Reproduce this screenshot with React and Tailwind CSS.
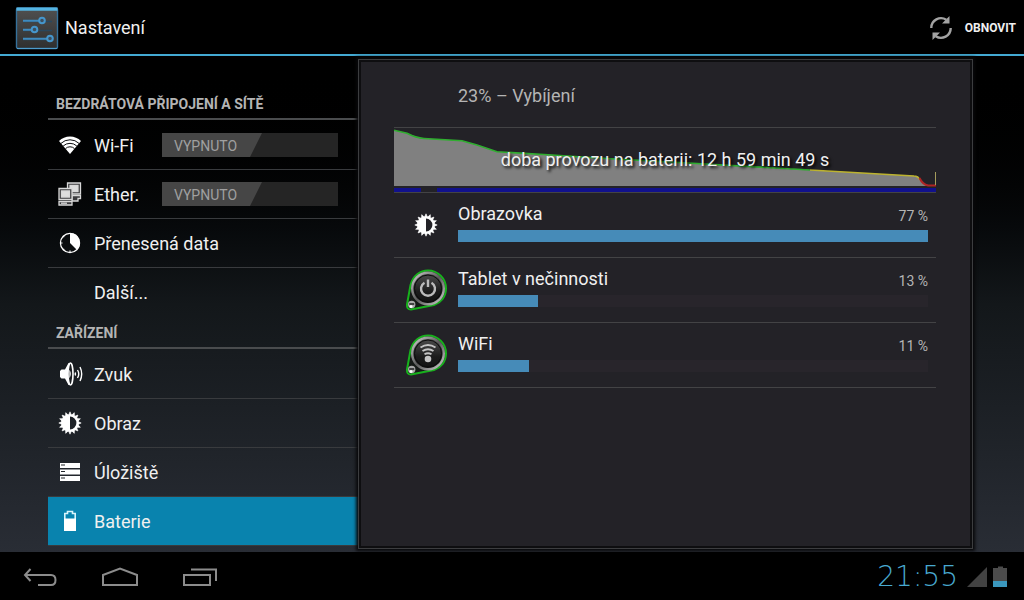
import { useState } from 'react'

const TEETH = Array.from({ length: 16 }, (_, i) => i * 22.5)

const WifiIcon = () => (
  <svg width="24" height="24" viewBox="0 0 24 24">
    <path d="M1 8a15.500 15.500 0 0 1 22 0L12 21z" fill="#fff" />
    <g fill="none" stroke="#0b0c0e" strokeWidth="1">
      <path d="M3 10.400a13 13 0 0 1 18 0" />
      <path d="M5.200 13a10 10 0 0 1 13.600 0" />
      <path d="M7.500 15.600a6.500 6.500 0 0 1 9 0" />
    </g>
  </svg>
)

const EthernetIcon = () => (
  <svg width="24" height="24" viewBox="0 0 24 24" fill="#3a3a3c" stroke="#d8d8d8" strokeWidth="1.300">
    <path d="M9.500 1h13v11h-13z" />
    <path d="M12 3.500h8v6h-8z" fill="#ddd" />
    <path d="M14 13.500h8.500v3H20v2.500h-6z" />
    <path d="M1 6.500h13v11H1z" />
    <path d="M3.500 9h8v6h-8z" fill="#ddd" />
    <path d="M1 19.500h13v3.500H1z" />
    <path d="M3 21.200h6" />
  </svg>
)

const DataIcon = () => (
  <svg width="24" height="24" viewBox="0 0 24 24">
    <circle cx="12" cy="12" r="9.600" fill="none" stroke="#fff" strokeWidth="1.200" />
    <path d="M12 2a10 10 0 0 1 7 17L12 12z" fill="#fff" />
    <path d="M2 12h2.500M12 22v-2.500M5 5l1.200 1.200M5 19l1.200-1.200" stroke="#fff" strokeWidth="1.200" />
  </svg>
)

const SoundIcon = () => (
  <svg width="26" height="26" viewBox="0 0 26 26">
    <path d="M4.500 8.500H8L11.500 2h2v22h-2L8 17.500H4.500L3 16v-6z" fill="#fff" />
    <ellipse cx="13.500" cy="13" rx="2.500" ry="11" fill="#1b1e22" stroke="#fff" strokeWidth="1.600" />
    <path d="M12.300 8.500q3 4.500 0 9z" fill="#fff" />
    <g fill="none" stroke="#fff" strokeWidth="1.400">
      <path d="M18 11.500q1 1.500 0 3" />
      <path d="M20.500 9q2.500 4 0 8" />
      <path d="M23 6q3.400 7 0 14" />
    </g>
  </svg>
)

const BrightnessIcon = () => (
  <svg width="24" height="24" viewBox="0 0 24 24">
    {TEETH.map(a => (
      <path key={a} d="M10.600 4L12 .8 13.400 4z" fill="#fff" stroke="#fff" strokeWidth=".6" transform={`rotate(${a} 12 12)`} />
    ))}
    <circle cx="12" cy="12" r="7.600" fill="none" stroke="#fff" strokeWidth="2.400" />
    <path d="M12 4a8 8 0 0 0 0 16z" fill="#fff" />
  </svg>
)

const StorageIcon = () => (
  <svg width="24" height="24" viewBox="0 0 24 24">
    <path d="M2 3h20v5H2zM2 9.500h20v5H2zM2 16h20v5H2z" fill="#fff" />
    <path d="M3 5h4M3 11.500h4M3 18h4" stroke="#22262b" strokeWidth="1.200" />
  </svg>
)

const BatteryIcon = () => (
  <svg width="24" height="24" viewBox="0 0 24 24">
    <path d="M6.800 21V4.500h2.700v-2h5v2h2.700V21z" fill="none" stroke="#d9f4fb" strokeWidth="1.600" />
    <path d="M6 9.500h12V22H6z" fill="#fff" />
  </svg>
)

const SettingsLogo = () => (
  <svg width="44" height="44" viewBox="0 0 44 44">
    <defs>
      <linearGradient id="logoFace" x1="0" y1="0" x2="0" y2="1">
        <stop offset="0" stopColor="#505050" />
        <stop offset="1" stopColor="#2f2f2f" />
      </linearGradient>
    </defs>
    <rect x="1.500" y="2" width="41" height="40.500" rx="1.500" fill="url(#logoFace)" stroke="#35719b" strokeWidth="1.400" />
    <path d="M1.500 1.500h41v3.200h-41z" fill="#54b4e2" />
    <path d="M2 42.500h40" stroke="#4d9ccc" />
    <path d="M8 15.500h29M8 24.500h29M8 33.500h29" stroke="#29475e" strokeWidth="1.600" />
    <path d="M8 14.800h16M8 23.800h9M8 32.800h24" stroke="#3f8bbf" strokeWidth="2" />
    <g fill="#3d4f5e" stroke="#4596cc" strokeWidth="2">
      <circle cx="27" cy="14.500" r="2.800" />
      <circle cx="19.500" cy="23.500" r="2.800" />
      <circle cx="35" cy="32.500" r="2.800" />
    </g>
  </svg>
)

const RefreshIcon = () => (
  <svg width="24" height="26" viewBox="0 0 24 26">
    <g fill="none" stroke="#a3a3a3" strokeWidth="2.400">
      <path d="M2.300 13a9.700 9.700 0 0 1 15-8.200" />
      <path d="M21.700 13a9.700 9.700 0 0 1-15 8.200" />
    </g>
    <path d="M20.500 1v7.500h-7.500zM3.500 25v-7.500H11z" fill="#a3a3a3" />
  </svg>
)

// Round steel badge on a green ring, shared by the usage entries
const Badge = ({ kind }) => (
  <svg width="44" height="44" viewBox="0 0 44 44">
    <defs>
      <linearGradient id={`rim-${kind}`} x1="0" y1="0" x2="1" y2="1">
        <stop offset="0" stopColor="#d0d0d0" />
        <stop offset=".5" stopColor="#5a5a5a" />
        <stop offset="1" stopColor="#d2d2d2" />
      </linearGradient>
      <linearGradient id={`face-${kind}`} x1="0" y1="0" x2="0" y2="1">
        <stop offset="0" stopColor="#505050" />
        <stop offset=".6" stopColor="#1c1c1c" />
        <stop offset="1" stopColor="#111" />
      </linearGradient>
    </defs>
    <path d="M6.500 17C9 8 16 2.500 24 2.500a18 18 0 0 1 18 18c0 8-5 14-12 16.500L7 41.500q-4.500 0-4-5z" fill="#161a17" stroke="#17b11c" strokeWidth="2" />
    <circle cx="24" cy="20.500" r="15.800" fill={`url(#face-${kind})`} stroke={`url(#rim-${kind})`} strokeWidth="2.400" />
    <circle cx="24" cy="20.500" r="13.500" fill="none" stroke="#0c0c0c" />
    <circle cx="7.700" cy="36.500" r="3.700" fill="#a8a8a8" />
    <path d="M5.200 36h5" stroke="#222" strokeWidth="1.500" />
    <circle cx="7" cy="38.500" r="1.500" fill="#fff" />
    {kind === 'power' ? (
      <path d="M20.500 14.700a7 7 0 1 0 7 0M24 11.500v7.500" fill="none" stroke="#bbb" strokeWidth="2.400" />
    ) : (
      <g fill="none" stroke="#c4c4c4" strokeWidth="1.900">
        <path d="M16.500 14.500q7.500-5 15 0" />
        <path d="M18.500 18q5.500-3.500 11 0" />
        <path d="M20.500 21.200q3.500-2 7 0" />
        <circle cx="24" cy="26" r="3.300" fill="#c4c4c4" stroke="none" />
      </g>
    )}
  </svg>
)

const SECTIONS = [
  {
    title: 'BEZDRÁTOVÁ PŘIPOJENÍ A SÍTĚ',
    items: [
      { id: 'wifi', label: 'Wi-Fi', icon: <WifiIcon />, toggle: true },
      { id: 'ethernet', label: 'Ether.', icon: <EthernetIcon />, toggle: true },
      { id: 'data', label: 'Přenesená data', icon: <DataIcon /> },
      { id: 'more', label: 'Další...', icon: null },
    ],
  },
  {
    title: 'ZAŘÍZENÍ',
    items: [
      { id: 'sound', label: 'Zvuk', icon: <SoundIcon /> },
      { id: 'display', label: 'Obraz', icon: <BrightnessIcon /> },
      { id: 'storage', label: 'Úložiště', icon: <StorageIcon /> },
      { id: 'battery', label: 'Baterie', icon: <BatteryIcon /> },
    ],
  },
]

const USAGE = [
  { name: 'Obrazovka', percent: 77, bar: 100, icon: <BrightnessIcon /> },
  { name: 'Tablet v nečinnosti', percent: 13, bar: 17, icon: <Badge kind="power" /> },
  { name: 'WiFi', percent: 11, bar: 15, icon: <Badge kind="wifi" /> },
]

function Toggle({ id }) {
  return (
    <span className="relative ml-auto mr-5 h-6 w-44 shrink-0">
      <input id={id} type="checkbox" role="switch" className="block h-6 w-full appearance-none bg-[#252525]" />
      <span className="pointer-events-none absolute inset-y-0 left-0 flex w-25 items-center bg-[#464646] pl-3 pt-0.5 text-sm text-[#a0a0a0] [clip-path:polygon(0_0,100%_0,88%_100%,0_100%)]">
        VYPNUTO
      </span>
    </span>
  )
}

function MenuRow({ item, selected, last, onSelect }) {
  const border = last ? 'border-transparent' : 'border-[#393b3e]'
  const content = (
    <>
      <span className="flex w-7 shrink-0 justify-center">{item.icon}</span>
      <span className="pt-0.5">{item.label}</span>
    </>
  )
  const row = `flex h-[49px] w-full items-center gap-2.5 border-b pl-2 text-left text-lg ${border} ${selected ? 'bg-[#0983ae]' : ''}`

  if (item.toggle) {
    return (
      <li className={row}>
        <label htmlFor={item.id} className="flex items-center gap-2.5">{content}</label>
        <Toggle id={item.id} />
      </li>
    )
  }
  return (
    <li>
      <button type="button" onClick={onSelect} className={row}>{content}</button>
    </li>
  )
}

function BatteryChart() {
  return (
    <div className="relative h-[66px] border-y border-[#434345]">
      <svg className="block h-16 w-full" viewBox="0 0 542 64" preserveAspectRatio="none">
        <path d="M0 2.300L13 5.300 26 10.300 68 12.700 83 17 103 23.700 158 27 208 30.300 281 34.300 416 42 524 48.300 527 53 531 56.500 542 58H0z" fill="#808080" />
        <g fill="none" strokeWidth="1.600">
          <path d="M0 2.300L13 5.300Q22 10 30 10.500L68 12.700 83 17 103 23.700 158 27 208 30.300 281 34.300 416 42" stroke="#2fae2f" />
          <path d="M416 42L520 48Q524 48 526 52" stroke="#bdb32f" />
          <path d="M525.500 50Q529 57 534 57.400H542" stroke="#b02424" strokeWidth="2" />
        </g>
        <path d="M541.500 44v13" stroke="#a49c5c" />
        <path d="M0 60h27v4H0zM43 60h499v4H43z" fill="#11118c" />
      </svg>
      <p className="absolute inset-0 flex items-center justify-center text-lg [text-shadow:2px_2px_3px_#000]">
        doba provozu na baterii: 12 h 59 min 49 s
      </p>
    </div>
  )
}

function UsageRow({ entry }) {
  return (
    <li className="flex h-[65px] items-center border-b border-[#434345] pr-2">
      <span className="flex w-16 shrink-0 justify-center">{entry.icon}</span>
      <div className="flex-1 pb-1.5">
        <div className="mb-1 flex h-6 items-end justify-between">
          <span className="text-lg leading-6">{entry.name}</span>
          <span className="text-sm text-[#b5b5b5]">{entry.percent} %</span>
        </div>
        <div className="h-3 bg-[#28252b]">
          <div className="h-full bg-[#468bb8]" style={{ width: `${entry.bar}%` }} />
        </div>
      </div>
    </li>
  )
}

export default function App() {
  const [selected, setSelected] = useState('battery')

  return (
    <div className="flex min-h-screen flex-col bg-black font-['Roboto',sans-serif] text-[#f0f0f0]">
      <header className="flex h-14 shrink-0 items-center border-b-2 border-[#43a9d2] pl-[15px] pr-2 pt-0.5">
        <SettingsLogo />
        <h1 className="ml-1.5 text-lg">Nastavení</h1>
        <button type="button" className="ml-auto flex items-center gap-3 text-xs font-bold">
          <RefreshIcon />
          OBNOVIT
        </button>
      </header>

      <main className="flex flex-1 bg-linear-to-b from-black via-[#13171a] to-[#292d35] pl-12 pr-[51px]">
        <nav className="w-[310px] shrink-0 pt-8">
          {SECTIONS.map(section => (
            <section key={section.title}>
              <h2 className="mb-px flex h-8 items-center border-b-2 border-[#4a4c4e] pl-2 pt-0.5 text-sm font-bold text-[#b4b4b4]">
                {section.title}
              </h2>
              <ul>
                {section.items.map(item => (
                  <MenuRow
                    key={item.id}
                    item={item}
                    selected={selected === item.id}
                    last={item.id === 'more'}
                    onSelect={() => setSelected(item.id)}
                  />
                ))}
              </ul>
            </section>
          ))}
        </nav>

        <section className="my-[3px] flex-1 border border-[#3c3d3f] bg-[#0e0e10] p-0.5 shadow-[0_0_3px_2px_#08080a]">
          <div className="h-full bg-[#232227] pl-[33px] pr-[34px]">
            <h2 className="flex h-[65px] items-center pl-16 pt-0.5 text-lg text-[#b4b4b4]">23% – Vybíjení</h2>
            <BatteryChart />
            <ul>
              {USAGE.map(entry => <UsageRow key={entry.name} entry={entry} />)}
            </ul>
          </div>
        </section>
      </main>

      <footer className="flex h-12 shrink-0 items-center bg-black pr-4 pt-0.5">
        <button type="button" aria-label="Zpět" className="flex h-11 w-20 items-center justify-center">
          <svg width="34" height="20" viewBox="0 0 34 20" fill="none" stroke="#8c8c8c" strokeWidth="2">
            <path d="M7.500 2L2 8l5.500 6M2 8h26q4.500 0 4.500 5t-4.500 5H15" />
          </svg>
        </button>
        <button type="button" aria-label="Domů" className="flex h-11 w-20 items-center justify-center">
          <svg width="38" height="20" viewBox="0 0 38 20" fill="none" stroke="#8c8c8c" strokeWidth="2">
            <path d="M2 18V8L19 1.500 36 8v10z" />
          </svg>
        </button>
        <button type="button" aria-label="Nedávné" className="flex h-11 w-20 items-center justify-center">
          <svg width="34" height="20" viewBox="0 0 34 20" fill="none" stroke="#8c8c8c" strokeWidth="2">
            <path d="M1 8h26v10H1zM8 2.500h25V14" />
          </svg>
        </button>
        <div className="ml-auto flex items-center gap-2">
          <span className="font-['DejaVu_Sans',sans-serif] text-[28px] font-extralight leading-8 text-[#48a9d0]">21:55</span>
          <svg width="42" height="22" viewBox="0 0 42 22">
            <path d="M1 21h20V1z" fill="#424242" />
            <path d="M27 2h5V.500h5V2h4v19H27z" fill="#4b4b4b" />
            <path d="M27 15h14v6H27z" fill="#3b97bd" />
          </svg>
        </div>
      </footer>
    </div>
  )
}
